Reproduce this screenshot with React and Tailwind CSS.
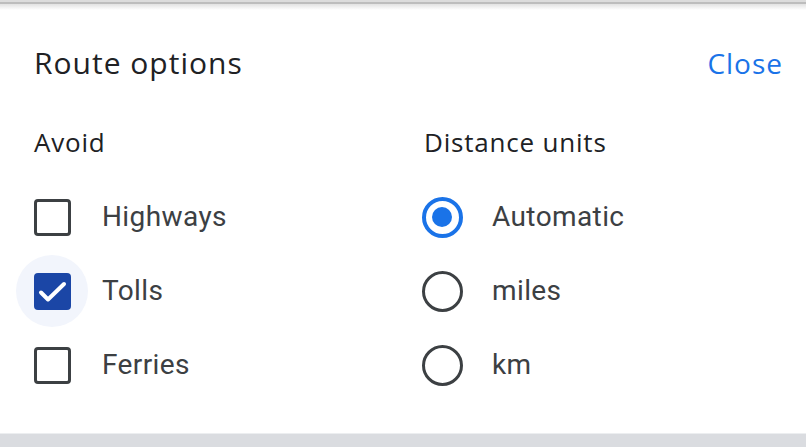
import React from "react";

const heading = { fontFamily: '"Open Sans", "Noto Sans", sans-serif' };
const body = { fontFamily: 'Roboto, "Noto Sans", sans-serif' };

function Checkbox({ checked }) {
  return (
    <div className={`-ml-[18px] w-[72px] h-[72px] rounded-full flex items-center justify-center ${checked ? "bg-[#f2f5fc]" : ""}`}>
      {checked ? (
        <div className="w-[37px] h-[37px] rounded-[4px] bg-[#1b46a6] flex items-center justify-center">
          <svg width="37" height="37" viewBox="0 0 37 37">
            <path d="M7 19.5 L14 26.5 L30 11" fill="none" stroke="white" strokeWidth="4" strokeLinecap="round" strokeLinejoin="round" />
          </svg>
        </div>
      ) : (
        <div className="w-[37px] h-[37px] rounded-[4px] border-[3.5px] border-[#3c4043]" />
      )}
    </div>
  );
}

function Radio({ checked }) {
  return (
    <div className="-ml-[18px] w-[72px] h-[72px] flex items-center justify-center">
      {checked ? (
        <div className="w-[41px] h-[41px] rounded-full border-[4px] border-[#1a73e8] flex items-center justify-center">
          <div className="w-[20px] h-[20px] rounded-full bg-[#1a73e8]" />
        </div>
      ) : (
        <div className="w-[41px] h-[41px] rounded-full border-[3.5px] border-[#3c4043]" />
      )}
    </div>
  );
}

function Row({ control, label }) {
  return (
    <div className="h-[74px] flex items-center">
      {control}
      <span className="ml-[14px] text-[28px] tracking-[0.4px] text-[#3c4043] leading-none" style={body}>{label}</span>
    </div>
  );
}

export default function App() {
  return (
    <div className="w-[806px] h-[447px] bg-white flex flex-col overflow-hidden">
      <div className="h-[2px] bg-[#dcdcdc]" />
      <div className="h-[2px] bg-[#bdbdbd]" />
      <div className="h-[6px] bg-linear-to-b from-[#e2e2e2] to-white" />
      <div className="flex-1 flex flex-col pl-[34px] pr-[23px]">
        <div className="mt-[35px] h-[36px] flex items-center justify-between">
          <span className="text-[30px] tracking-[1px] text-[#202124] leading-none" style={heading}>Route options</span>
          <span className="text-[28px] tracking-[1px] text-[#1a73e8] leading-none" style={heading}>Close</span>
        </div>
        <div className="mt-[46px] grid grid-cols-[390px_1fr]">
          <div className="flex flex-col">
            <div className="h-[30px] flex items-center text-[26px] tracking-[0.8px] font-medium text-[#202124] leading-none" style={heading}>Avoid</div>
            <div className="mt-[23px] flex flex-col">
              <Row control={<Checkbox />} label="Highways" />
              <Row control={<Checkbox checked />} label="Tolls" />
              <Row control={<Checkbox />} label="Ferries" />
            </div>
          </div>
          <div className="flex flex-col">
            <div className="h-[30px] flex items-center text-[26px] tracking-[0.8px] font-medium text-[#202124] leading-none" style={heading}>Distance units</div>
            <div className="mt-[23px] flex flex-col">
              <Row control={<Radio checked />} label="Automatic" />
              <Row control={<Radio />} label="miles" />
              <Row control={<Radio />} label="km" />
            </div>
          </div>
        </div>
      </div>
      <div className="h-[1px] bg-[#eceef0]" />
      <div className="h-[13px] bg-[#dadce0]" />
    </div>
  );
}
